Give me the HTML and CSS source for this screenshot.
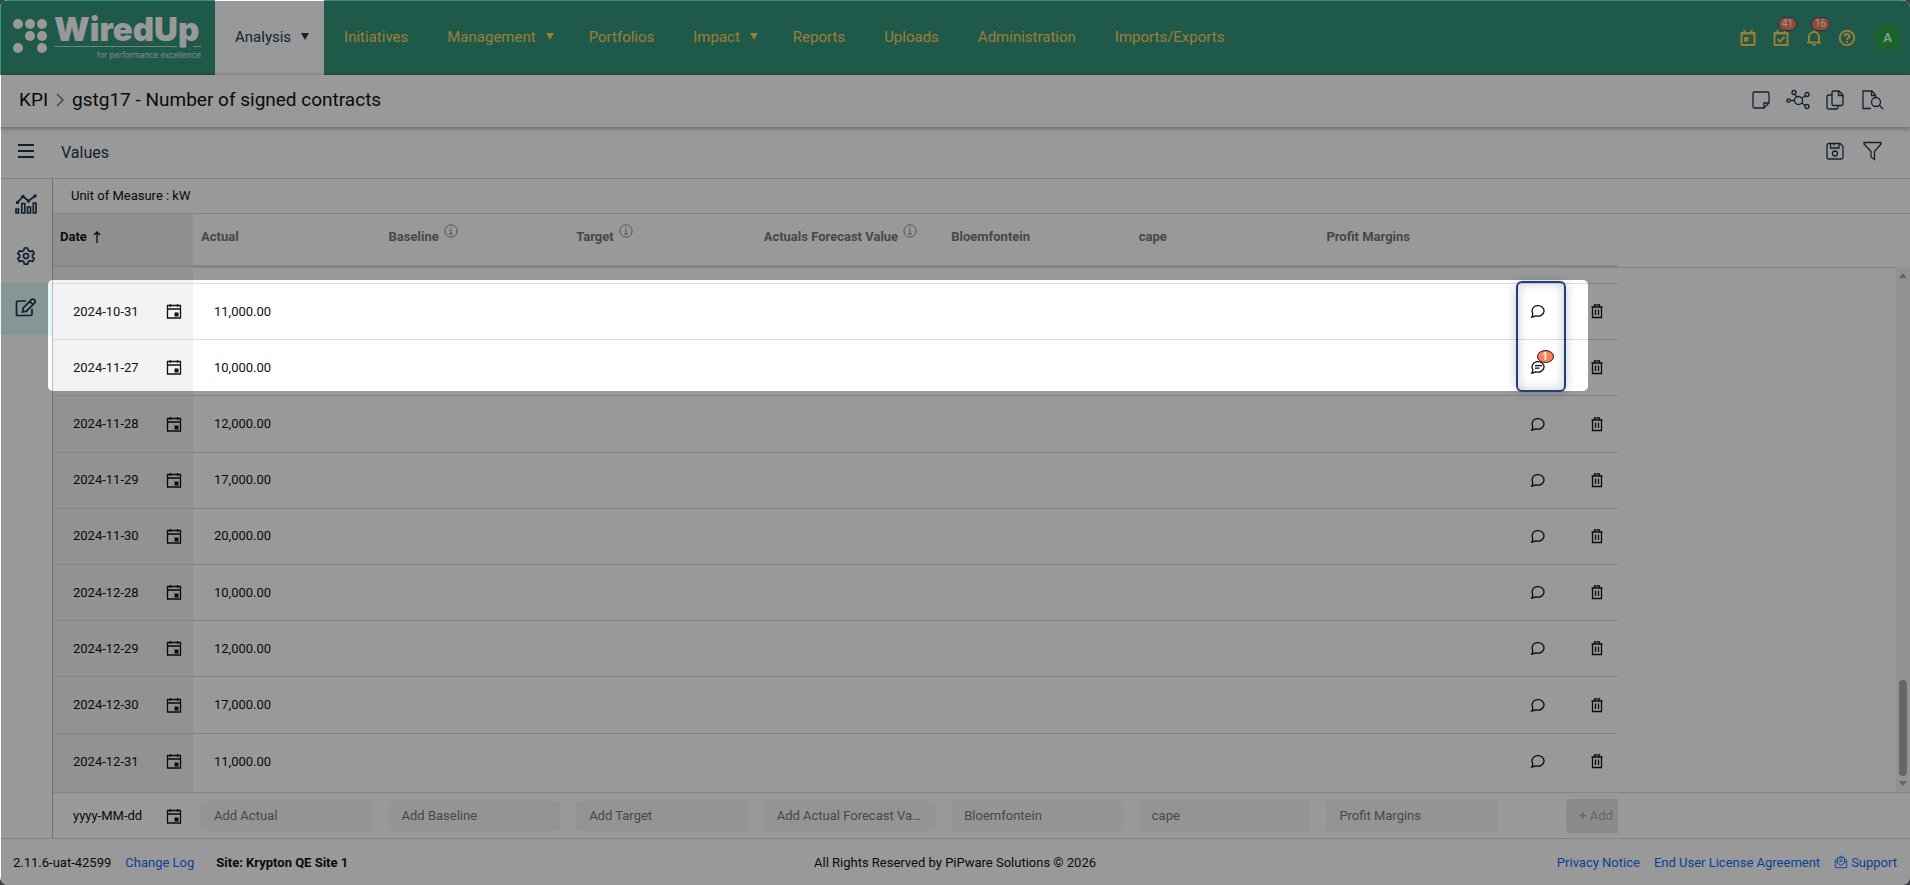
FILE: index.html
```html
<!DOCTYPE html>
<html lang="en">
<head>
  <meta charset="UTF-8" />
  <title>WiredUp - KPI Values</title>
  <link rel="stylesheet" href="styles.css">
</head>
<body>
  <!-- Icon sprite -->
  <svg class="sprite" aria-hidden="true">
    <symbol id="i-calendar" viewBox="0 0 16 16"><path d="M1.500 2.500h13v12.500h-13zM1.500 6h13M4.500 1v3M11.500 1v3" /><path class="fill" d="M8.500 9.500h4v4h-4z" /></symbol>
    <symbol id="i-comment" viewBox="0 0 16 16"><path d="M2.700 10.300A6 5.300 0 1 1 5.800 12.800Q4 14 1.800 14Q3 12.500 2.700 10.300z" /></symbol>
    <symbol id="i-comment-text" viewBox="0 0 16 16"><path d="M2.700 10.300A6 5.300 0 1 1 5.800 12.800Q4 14 1.800 14Q3 12.500 2.700 10.300zM5 6.700h7M5 9.200h4.500" /></symbol>
    <symbol id="i-trash" viewBox="0 0 16 16"><path d="M2.500 4h11M3.500 4v10.500h9V4M5.500 3.500V1.800h5v1.700M6.500 6.500v5.500M9.500 6.500v5.500" /></symbol>
    <symbol id="i-info" viewBox="0 0 16 16"><circle cx="8" cy="8" r="7" /><path d="M6.500 7H8v4.500M6 11.500h4M7.300 4.500h1.400" /></symbol>
  </svg>

  <div class="app">
    <header class="topbar">
      <a class="logo" href="#" aria-label="WiredUp home">
        <svg viewBox="0 0 215 75">
          <g class="logo-dots">
            <circle cx="18" cy="24" r="5" /><circle cx="30" cy="24" r="5" /><circle cx="42" cy="24" r="5" />
            <circle cx="30" cy="36" r="5" /><circle cx="42" cy="36" r="5" />
            <circle cx="18" cy="48" r="5" /><circle cx="42" cy="48" r="5" />
          </g>
          <text class="logo-name" x="54" y="41">WiredUp</text>
          <path class="logo-line" d="M54 46.500h123M193 46.500h8" />
          <text class="logo-tag" x="201" y="58">for performance excellence</text>
        </svg>
      </a>
      <nav>
        <a class="active" href="#">Analysis<span class="caret"></span></a>
        <a href="#">Initiatives</a>
        <a href="#">Management<span class="caret"></span></a>
        <a href="#">Portfolios</a>
        <a href="#">Impact<span class="caret"></span></a>
        <a href="#">Reports</a>
        <a href="#">Uploads</a>
        <a href="#">Administration</a>
        <a href="#">Imports/Exports</a>
      </nav>
      <div class="top-actions">
        <button aria-label="Calendar"><svg viewBox="0 0 16 16"><path d="M1.500 3h13v12h-13zM4.500 0v3M11.500 0v3M1.500 3.500h13" /><path class="fill" d="M4 7h4.500v4.500H4z" /></svg></button>
        <button aria-label="Tasks"><svg viewBox="0 0 16 16"><path d="M1.500 3h13v12h-13zM4.500 0v3M11.500 0v3M1.500 3.500h13M4.500 9l2.500 2.500L11.500 7" /></svg><span class="badge">41</span></button>
        <button aria-label="Notifications"><svg viewBox="0 0 16 16"><path d="M1 12.500h14M3 12V7a5 5 0 0 1 10 0v5M8 2V0.500M6.500 15h3" /></svg><span class="badge">16</span></button>
        <button aria-label="Help"><svg viewBox="0 0 16 16"><circle cx="8" cy="8" r="7.200" /><path d="M5.700 6.300a2.300 2.200 0 1 1 3.400 1.900Q8 8.800 8 9.800M8 11v1.700" /></svg></button>
        <button class="avatar" aria-label="Account">A</button>
      </div>
    </header>

    <div class="crumbs">
      <h1><a href="#">KPI</a><svg viewBox="0 0 8 14"><path d="M1 1l6 6-6 6" /></svg>gstg17 - Number of signed contracts</h1>
      <div class="tools">
        <button aria-label="Notes"><svg viewBox="0 0 20 20"><path d="M3.500 2h13a1.500 1.500 0 0 1 1.500 1.500V13l-5 5H3.500A1.500 1.500 0 0 1 2 16.500v-13A1.500 1.500 0 0 1 3.500 2zM18 13h-5v5" /></svg></button>
        <button class="wide" aria-label="Relations"><svg viewBox="0 0 24 20"><circle cx="12.500" cy="10.500" r="4" /><circle cx="8" cy="2.500" r="2" /><circle cx="21" cy="4.500" r="2" /><circle cx="21" cy="16.500" r="2" /><circle cx="2.500" cy="10.500" r="1.700" /><path d="M9 4.500l1.500 2.500M19 6l-3 2M19 15.500l-3-2.500M4.500 10.500h4" /></svg></button>
        <button aria-label="Copy"><svg viewBox="0 0 20 20"><path d="M8.500 1H14l4 4v9a1.500 1.500 0 0 1-1.500 1.500h-8A1.500 1.500 0 0 1 7 14V2.500A1.500 1.500 0 0 1 8.500 1zM13.500 1v4.500H18M7 5H3.500A1.500 1.500 0 0 0 2 6.500v11A1.500 1.500 0 0 0 3.500 19h8a1.500 1.500 0 0 0 1.500-1.500v-2" /></svg></button>
        <button aria-label="Preview"><svg viewBox="0 0 20 20"><path d="M9 18.500H1V1h9l3.500 4v2M9.500 1v4.500h4" /><circle cx="14" cy="12" r="4.500" /><path d="M17.300 15.300L21 19" /></svg></button>
      </div>
    </div>

    <div class="page-title">
      <button class="menu" aria-label="Toggle menu"><svg viewBox="0 0 16 14"><path d="M0 1h16M0 7h16M0 13h16" /></svg></button>
      <h2>Values</h2>
      <div class="tools">
        <button aria-label="Save"><svg viewBox="0 0 20 20"><path d="M3.500 2.500h11.500l3 3v11a1.500 1.500 0 0 1-1.500 1.500h-13A1.500 1.500 0 0 1 2 16.500V4a1.500 1.500 0 0 1 1.500-1.500zM5.500 2.500V7H14V2.500M9 2.500v2" /><circle cx="10" cy="12.500" r="2.500" /></svg></button>
        <button aria-label="Filter"><svg viewBox="0 0 20 20"><path d="M2 1.500h17v1.500L12.500 10.500v8L9 16v-5.500L2 3z" /></svg></button>
      </div>
    </div>

    <div class="workspace">
      <aside class="sidebar">
        <a href="#" aria-label="Charts"><svg viewBox="0 0 22 20"><path d="M1 15h2.500v4H1zM6.800 9.500h3V19h-3zM12.500 13h3v6h-3zM18.300 9h2.700v10h-2.700z" /><path d="M2 9l6-6.500L13.500 7 20 2" /><g class="fill"><circle cx="2.500" cy="8.500" r="1.700" /><circle cx="8" cy="2.500" r="1.700" /><circle cx="13.500" cy="7" r="1.700" /><circle cx="20" cy="2" r="1.700" /></g></svg></a>
        <a href="#" aria-label="Settings"><svg viewBox="0 0 22 20"><path d="M9.400 2h3.200l.6 2.400 1.900 1.100 2.400-.8 1.700 2.900-1.800 1.600v1.800l1.800 1.600-1.700 2.900-2.400-.8-1.900 1.100-.6 2.400H9.400l-.6-2.400-1.900-1.100-2.400.8-1.700-2.900L4.600 11V9.200L2.800 7.600l1.700-2.900 2.400.8 1.900-1.100z" /><circle cx="11" cy="10.100" r="2.600" /></svg></a>
        <a class="active" href="#" aria-label="Edit values"><svg viewBox="0 0 22 20"><path d="M11 3H3a1.500 1.500 0 0 0-1.500 1.500v13h14A1.500 1.500 0 0 0 17 16v-5" /><path d="M7.500 14l.7-4L16.500 1.700q1.500-1.200 3 .2t.2 3L11.500 13.200zM14.800 3.500l3.200 3.200" /></svg></a>
      </aside>

      <main>
        <div class="unit">Unit of Measure : kW</div>

        <div class="grid-head">
          <table>
            <colgroup><col class="col-date"><col span="7"><col class="col-comment"><col class="col-delete"></colgroup>
            <thead>
              <tr>
                <th class="date">Date <svg class="sort" viewBox="0 0 8 12"><path d="M4 12V1M1 4l3-3 3 3" /></svg></th>
                <th>Actual</th>
                <th>Baseline <svg class="info"><use href="#i-info" /></svg></th>
                <th>Target <svg class="info"><use href="#i-info" /></svg></th>
                <th>Actuals Forecast Value <svg class="info"><use href="#i-info" /></svg></th>
                <th>Bloemfontein</th>
                <th>cape</th>
                <th>Profit Margins</th>
                <th></th>
                <th></th>
              </tr>
            </thead>
          </table>
        </div>

        <div class="grid-body">
          <table>
            <colgroup><col class="col-date"><col span="7"><col class="col-comment"><col class="col-delete"></colgroup>
            <tbody id="valueRows">
              <tr class="cut"><td class="date"></td><td colspan="9"></td></tr>
            </tbody>
          </table>
          <div class="scrollbar"><span class="up"></span><span class="thumb"></span><span class="down"></span></div>
        </div>

        <form class="grid-add">
          <table>
            <colgroup><col class="col-date"><col span="7"><col class="col-comment"><col class="col-delete"></colgroup>
            <tbody>
              <tr>
                <td class="date"><div class="date-field"><input type="text" class="plain" placeholder="yyyy-MM-dd" aria-label="New date"><button type="button" aria-label="Pick date"><svg><use href="#i-calendar" /></svg></button></div></td>
                <td><input type="text" placeholder="Add Actual" aria-label="Actual"></td>
                <td><input type="text" placeholder="Add Baseline" aria-label="Baseline"></td>
                <td><input type="text" placeholder="Add Target" aria-label="Target"></td>
                <td><input type="text" placeholder="Add Actual Forecast Value" aria-label="Actual Forecast Value"></td>
                <td><input type="text" placeholder="Bloemfontein" aria-label="Bloemfontein"></td>
                <td><input type="text" placeholder="cape" aria-label="cape"></td>
                <td><input type="text" placeholder="Profit Margins" aria-label="Profit Margins"></td>
                <td colspan="2" class="add-cell"><button type="button" class="add" disabled>+ Add</button></td>
              </tr>
            </tbody>
          </table>
        </form>
      </main>
    </div>

    <footer>
      <div class="foot-left"><span>2.11.6-uat-42599</span><a href="#">Change Log</a><strong>Site: Krypton QE Site 1</strong></div>
      <div>All Rights Reserved by PiPware Solutions © 2026</div>
      <div class="foot-right">
        <a href="#">Privacy Notice</a>
        <a href="#">End User License Agreement</a>
        <a class="support" href="#"><svg viewBox="0 0 16 16"><path d="M1.500 6v8.500h13V6M1.500 6L4 4M14.500 6L12 4M4 9V3h8v6M6 2.500l2-1.500 2 1.500M1.500 7L8 12l6.500-5M6 5.500h4M6 7.500h4" /></svg>Support</a>
      </div>
    </footer>

    <!-- Guided tour: dimmed page with the comment column picked out -->
    <div class="tour">
      <div class="spotlight"></div>
      <div class="marker"></div>
    </div>
  </div>

  <script>
    const values = [
      { date: "2024-10-31", actual: "11,000.00", comments: 0 },
      { date: "2024-11-27", actual: "10,000.00", comments: 1 },
      { date: "2024-11-28", actual: "12,000.00", comments: 0 },
      { date: "2024-11-29", actual: "17,000.00", comments: 0 },
      { date: "2024-11-30", actual: "20,000.00", comments: 0 },
      { date: "2024-12-28", actual: "10,000.00", comments: 0 },
      { date: "2024-12-29", actual: "12,000.00", comments: 0 },
      { date: "2024-12-30", actual: "17,000.00", comments: 0 },
      { date: "2024-12-31", actual: "11,000.00", comments: 0 }
    ];

    const body = document.getElementById("valueRows");

    values.forEach(v => {
      const tr = document.createElement("tr");
      const icon = v.comments ? "i-comment-text" : "i-comment";
      const count = v.comments ? `<span class="count">${v.comments}</span>` : "";
      tr.innerHTML = `
        <td class="date"><div class="date-field"><input type="text" class="plain" value="${v.date}" aria-label="Date"><button type="button" aria-label="Pick date"><svg><use href="#i-calendar" /></svg></button></div></td>
        <td><input type="text" class="plain" value="${v.actual}" aria-label="Actual ${v.date}"></td>
        <td></td><td></td><td></td><td></td><td></td><td></td>
        <td class="comment"><button type="button" aria-label="Comments"><svg><use href="#${icon}" /></svg>${count}</button></td>
        <td class="delete"><button type="button" aria-label="Delete"><svg><use href="#i-trash" /></svg></button></td>
      `;
      body.appendChild(tr);
    });
  </script>
</body>
</html>
```
FILE: styles.css
```css
* { box-sizing: border-box; }

html, body { height: 100%; }

body {
  margin: 0;
  background: #3c3c42;
  font-family: Roboto, "Liberation Sans", sans-serif;
  font-size: 13px;
  color: #111;
}

a { text-decoration: none; color: inherit; }

button, input {
  font: inherit;
  color: inherit;
  border: none;
  background: none;
  padding: 0;
}

button { cursor: pointer; }

svg {
  display: block;
  fill: none;
  stroke: currentColor;
  overflow: visible;
}

.sprite { position: absolute; width: 0; height: 0; }
.fill { fill: currentColor; stroke: none; }

.app {
  position: relative;
  height: 100vh;
  display: flex;
  flex-direction: column;
  background: #fff;
  border-radius: 8px;
  overflow: hidden;
}

/* Top bar */
.topbar {
  flex: none;
  height: 75px;
  display: flex;
  background: #35947b;
  color: #ffd35c;
}

.logo { width: 215px; }
.logo-dots { fill: #fff; stroke: none; }
.logo-name {
  font: 900 33px Inter, sans-serif;
  fill: #fff;
  stroke: none;
}
.logo-line { stroke: #b9dcd3; stroke-width: 1; }
.logo-tag {
  font: 8px Inter, sans-serif;
  fill: #cfe7e1;
  stroke: none;
  text-anchor: end;
}

nav { display: flex; flex: 1; font-size: 15px; }
nav a {
  display: flex;
  align-items: center;
  padding: 0 19px 2px 20px;
}
nav a.active { background: #fff; color: #1d3a5a; }

.caret {
  border: 4px solid transparent;
  border-top: 7px solid currentColor;
  border-bottom: none;
  margin: 0 -4px 0 10px;
}

.top-actions {
  display: flex;
  align-items: center;
  gap: 17px;
  padding-right: 9px;
}
.top-actions button { position: relative; }
.top-actions svg { width: 16px; height: 16px; stroke-width: 2; }
.badge {
  position: absolute;
  left: 5px;
  top: -13px;
  padding: 0 3px;
  border: 1px solid #4a4a8c;
  border-radius: 8px;
  background: #f47c54;
  color: #fff;
  font-size: 10px;
  line-height: 12px;
}
.top-actions .avatar {
  width: 27px;
  height: 27px;
  margin-left: 2px;
  border-radius: 50%;
  background: #28a745;
  color: #fff;
  font-weight: 500;
}

/* Breadcrumb and title */
.crumbs {
  flex: none;
  position: relative;
  height: 52px;
  display: flex;
  align-items: center;
  justify-content: space-between;
  padding: 0 28px 3px 19px;
  box-shadow: 0 1px 5px rgba(0,0,0,0.4);
}
.crumbs h1 {
  display: flex;
  align-items: center;
  margin: 0;
  font-size: 19px;
  font-weight: 400;
}
.crumbs h1 svg {
  width: 8px;
  height: 14px;
  margin: 0 8px;
  color: #777;
  stroke-width: 1.5;
}

.tools { display: flex; gap: 17px; color: #1f3550; }
.tools svg { width: 20px; height: 20px; stroke-width: 1.3; }
.tools .wide svg { width: 24px; }
.tools .wide { margin: 0 -2px; }

.page-title {
  flex: none;
  height: 52px;
  display: flex;
  align-items: center;
  padding: 0 28px 3px 0;
  border-bottom: 1px solid #ddd;
  color: #1f3550;
}
.page-title .menu { width: 52px; padding: 0 18px; }
.page-title .menu svg { width: 16px; height: 14px; stroke-width: 2; }
.page-title h2 {
  flex: 1;
  margin: 2px 0 0 9px;
  font-size: 16px;
  font-weight: 400;
}

/* Sidebar */
.workspace { flex: 1; min-height: 0; display: flex; }
.sidebar {
  width: 53px;
  border-right: 1px solid #bbb;
  color: #1f3550;
}
.sidebar a {
  height: 52px;
  display: flex;
  align-items: center;
  justify-content: center;
  padding-bottom: 3px;
}
.sidebar a.active { background: #e2f8f9; }
.sidebar svg { width: 22px; height: 20px; stroke-width: 1.7; }

/* Values grid */
main { flex: 1; min-width: 0; display: flex; flex-direction: column; }
.unit {
  height: 35px;
  padding-left: 18px;
  line-height: 33px;
  border-bottom: 1px solid #ddd;
}

table {
  width: 1565px;
  table-layout: fixed;
  border-collapse: separate;
  border-spacing: 0;
}
.col-date { width: 140px; }
.col-comment { width: 61px; }
.col-delete { width: 51px; }

th {
  height: 53px;
  padding: 0 8px 6px;
  text-align: left;
  white-space: nowrap;
  border-bottom: 2px solid #ddd;
  color: #777;
  font-weight: 700;
}
th svg { display: inline-block; vertical-align: top; }
.info {
  width: 14px;
  height: 14px;
  margin: -5px 0 0 2px;
}
.sort {
  width: 8px;
  height: 12px;
  margin: 2px 0 0 3px;
  stroke-width: 1.3;
}
th.date { padding-left: 7px; background: #efefef; color: #111; }
.grid-head { border-bottom: 1px solid #ddd; margin-bottom: -1px; }

.grid-body { flex: 1; min-height: 0; display: flex; justify-content: space-between; }
.grid-body table { height: 100%; }
.grid-body td { height: 56px; padding: 0 0 1px; border-bottom: 1px solid #ddd; }
.grid-body tr:last-child td { height: 58px; padding-bottom: 3px; border-bottom: none; }
.grid-body .cut td { height: 17px; }
.grid-body .date { background: #f3f3f3; }

.plain { width: 100%; padding-left: 21px; }
.date .plain { padding-left: 20px; }
.date-field { display: flex; align-items: center; padding-right: 11px; }

td svg { width: 16px; height: 16px; stroke-width: 1.3; }
td button { display: block; margin: 0 auto; }
td.comment { padding-left: 2px; }
td.comment button { position: relative; }
td.delete { padding-left: 9px; }
.count {
  position: absolute;
  left: 7px;
  top: -9px;
  width: 17px;
  border: 1px solid #222;
  border-radius: 50%;
  background: #ff7f57;
  color: #fff;
  font-size: 10px;
  font-weight: 700;
  line-height: 11px;
}

.scrollbar {
  width: 14px;
  display: flex;
  flex-direction: column;
  align-items: center;
  padding: 6px 0;
  background: #f4f4f4;
}
.scrollbar span { width: 8px; }
.up { border: 4px solid transparent; border-top: none; border-bottom: 5px solid #aaa; }
.down { border: 4px solid transparent; border-bottom: none; border-top: 5px solid #aaa; }
.thumb { height: 96px; margin: auto 0 5px; border-radius: 4px; background: #aaa; }

.grid-add { border-top: 1px solid #ddd; }
.grid-add td { height: 45px; padding: 0 8px; }
.grid-add td.date { padding: 0; }
.grid-add input:not(.plain) {
  width: 100%;
  height: 30px;
  padding: 0 13px;
  border-radius: 2px;
  background: #f7f7f7;
  text-overflow: ellipsis;
}
.grid-add ::placeholder { color: #777; opacity: 1; }
.grid-add .plain::placeholder { color: #111; }
.grid-add td.add-cell { padding: 0; }
.add {
  width: 52px;
  height: 34px;
  margin-right: 0;
  padding-left: 8px;
  border-radius: 4px 0 0 4px;
  background: #e8e8e8;
  color: #aaa;
}

/* Footer */
footer {
  flex: none;
  height: 47px;
  display: grid;
  grid-template-columns: 1fr auto 1fr;
  align-items: center;
  padding: 0 13px;
  border-top: 1px solid #ddd;
}
footer a { color: #0d6efd; }
.foot-left, .foot-right { display: flex; gap: 14px; }
.foot-left strong { margin-left: 8px; }
.foot-right { justify-content: flex-end; }
.support { display: flex; gap: 3px; }
.support svg { width: 14px; height: 14px; }

/* Tour overlay */
.tour {
  position: absolute;
  inset: 1px 0 0 1px;
  overflow: hidden;
  pointer-events: none;
}
.spotlight {
  position: absolute;
  left: 47px;
  top: 279px;
  width: 1540px;
  height: 111px;
  border-radius: 5px;
  box-shadow: 0 0 0 3000px rgba(0,0,0,0.4);
}
.marker {
  position: absolute;
  left: 1515px;
  top: 280px;
  width: 50px;
  height: 111px;
  border: 2px solid #1d4079;
  border-radius: 6px;
  box-shadow: 0 0 12px rgba(0,0,0,0.2), inset 0 0 12px rgba(0,0,0,0.2);
}
```
